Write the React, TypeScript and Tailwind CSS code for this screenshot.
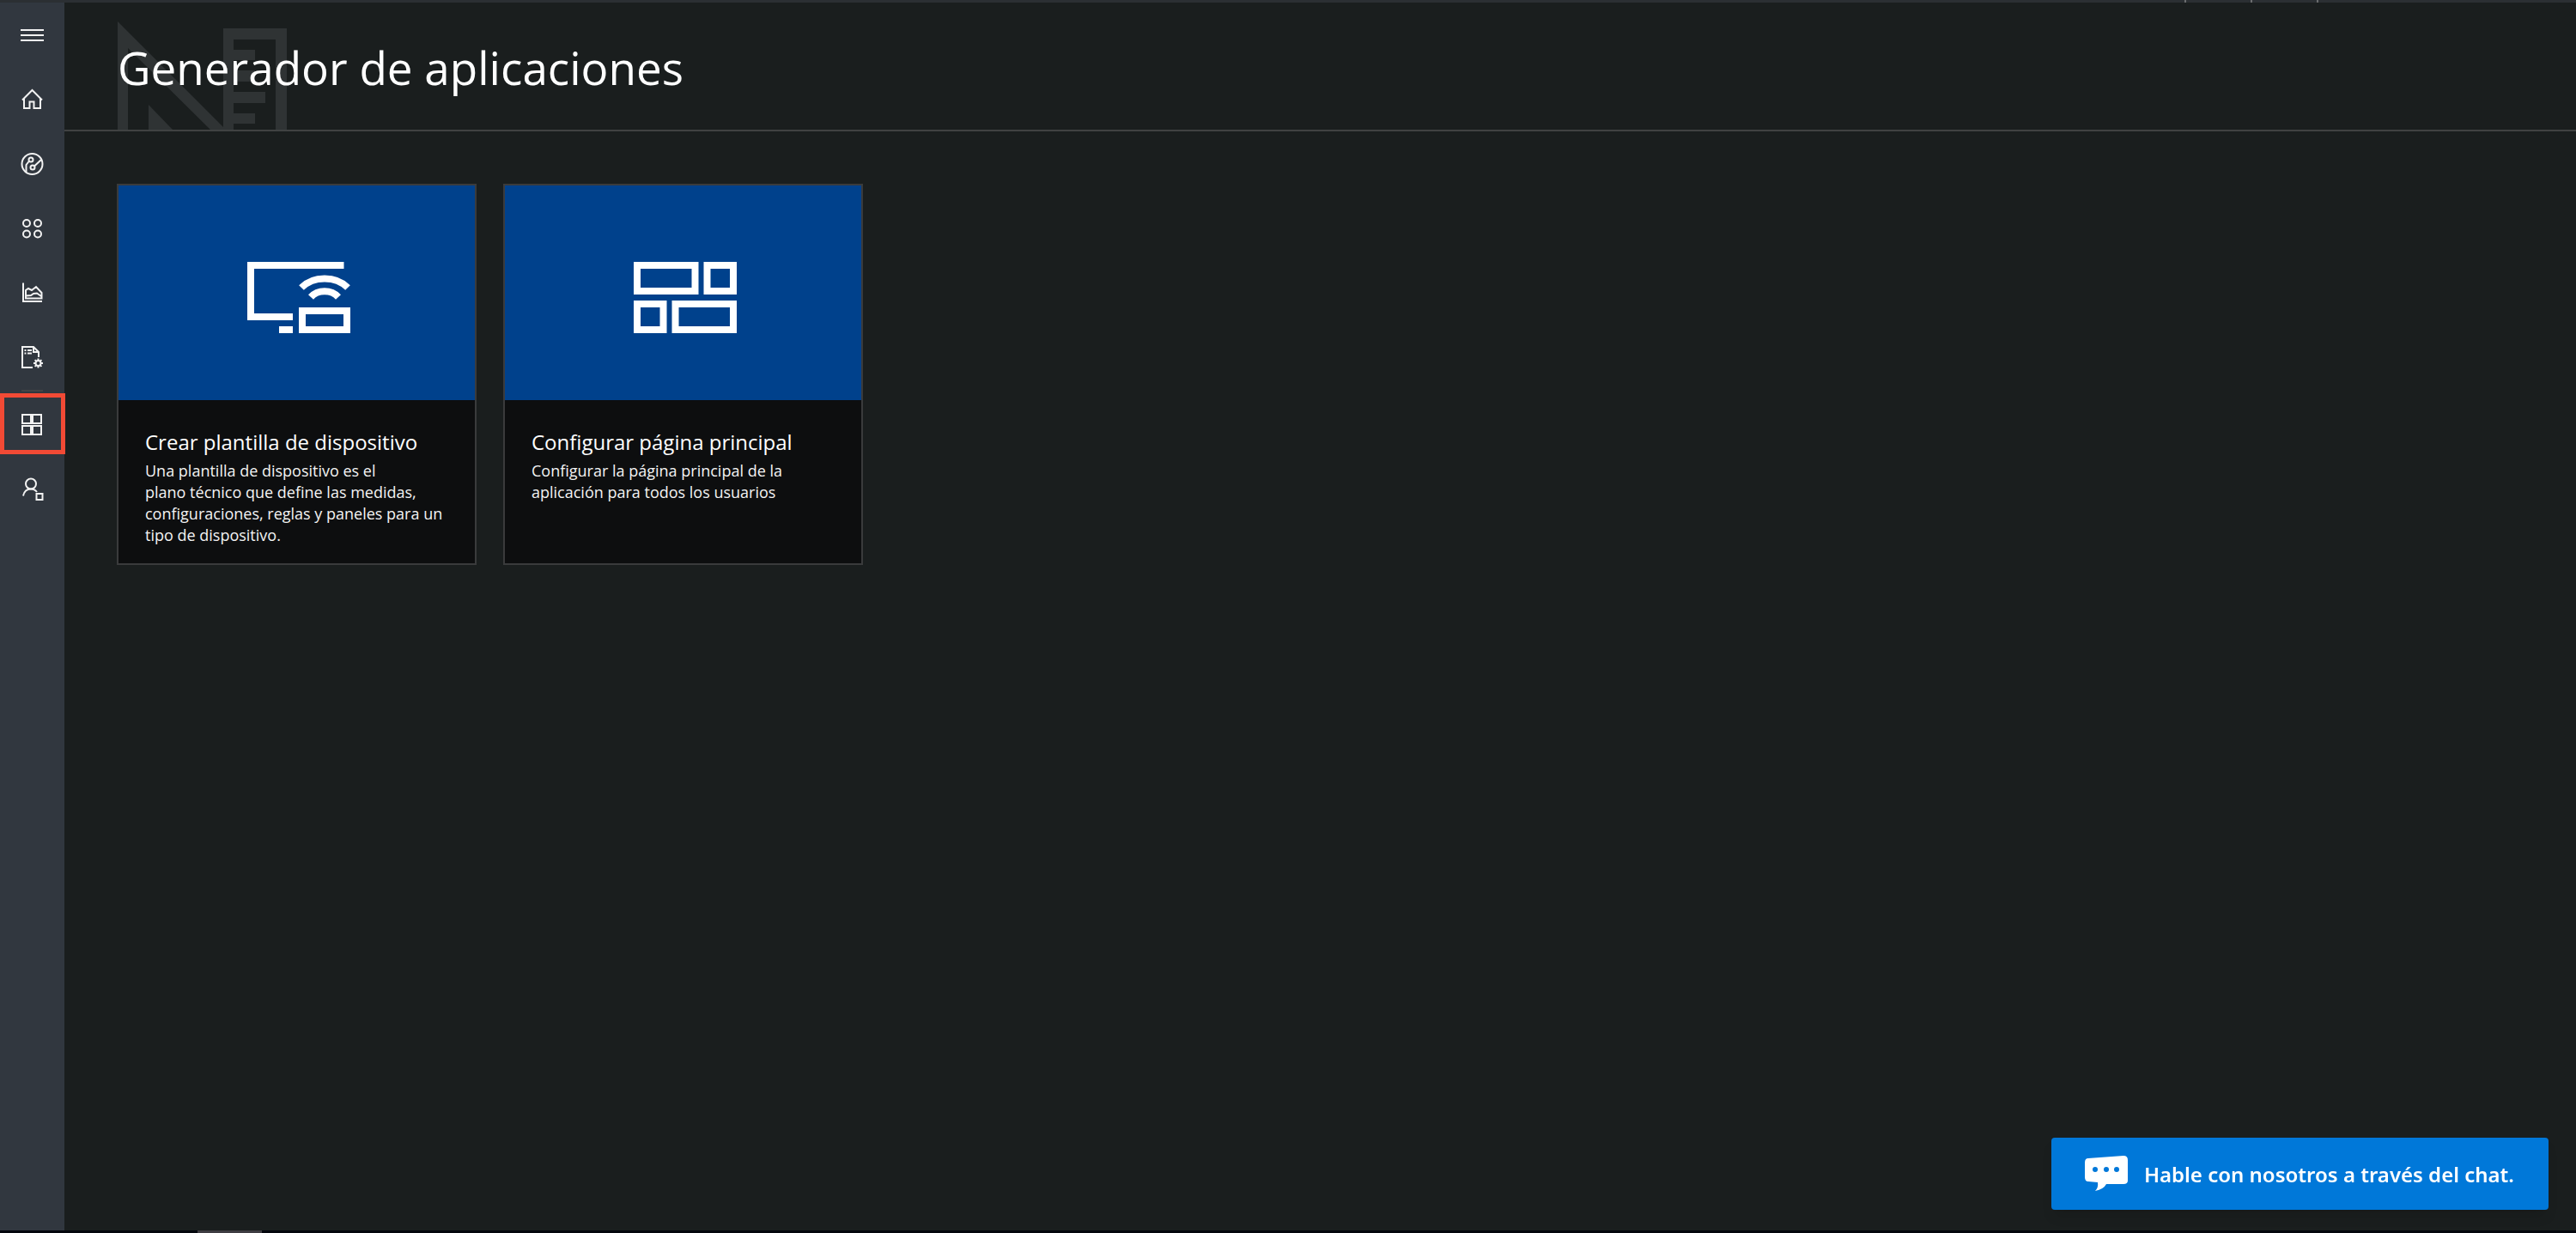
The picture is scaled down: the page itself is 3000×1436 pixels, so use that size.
import React from "react";

const stroke = { fill: "none", stroke: "currentColor", strokeWidth: 2 } as const;

function Glyph({ children }: { children: React.ReactNode }) {
  return (
    <svg width="27" height="27" viewBox="0 0 27 27" aria-hidden="true" {...stroke}>
      {children}
    </svg>
  );
}

const MenuIcon = () => (
  <Glyph>
    <path d="M0 8h27M0 14h27M0 20h27" />
  </Glyph>
);

const HomeIcon = () => (
  <Glyph>
    <path d="M2 14.500 13.500 3 25 14.500M4 12.500V24h6.500v-7.500h5V24H23V12.500" />
  </Glyph>
);

const DevicesIcon = () => (
  <Glyph>
    <circle cx="13.500" cy="14" r="12" />
    <circle cx="12" cy="9" r="2.500" />
    <circle cx="14" cy="18" r="2.500" />
    <path d="M6.500 23.500V15l3.500-4.500M16 16.500 24 9" />
  </Glyph>
);

const GroupsIcon = () => (
  <Glyph>
    <circle cx="7" cy="8" r="4" />
    <circle cx="20" cy="8" r="4" />
    <circle cx="7" cy="20.500" r="4" />
    <circle cx="20" cy="20.500" r="4" />
  </Glyph>
);

const AnalyticsIcon = () => (
  <Glyph>
    <path d="M3 2.500V24h22" />
    <path d="M6 20.500V11l3-2 4 2 5-4 6.500 7v6.500zM6 17.500l6-.5 3-2 4-.5 5 3.500" />
  </Glyph>
);

const JobsIcon = () => (
  <Glyph>
    <path d="M14 26H2V2h13l6 6v6M15 2v6h6" />
    <path d="M4.500 6h2M8 6h5M4.500 9.500h2M8 9.500h5" />
    <circle cx="20.500" cy="21" r="3" />
    <path d="M20.500 15.500v2.500M20.500 24v2.500M15 21h2.500M23.500 21H26M16.600 17.100l1.800 1.800M22.600 23.100l1.800 1.800M24.400 17.100l-1.800 1.800M18.400 23.100l-1.800 1.800" />
  </Glyph>
);

const BuilderIcon = () => (
  <Glyph>
    <path d="M2 2h10v10H2zM14 2h10v10H14zM2 15h10v10H2zM14 15h10v10H14z" />
  </Glyph>
);

const AdminIcon = () => (
  <Glyph>
    <circle cx="12" cy="7.500" r="6" />
    <path d="M3 21.500c1-5 4.500-8 9-8 3 0 5.500 1.500 7 3.500M18.500 19h7v7h-7z" />
  </Glyph>
);

function NavItem({ label, children }: { label: string; children: React.ReactNode }) {
  return (
    <a href="#" aria-label={label} className="flex h-[75px] w-full shrink-0 items-center justify-center">
      {children}
    </a>
  );
}

function Watermark() {
  return (
    <svg
      className="absolute bottom-0 left-[62px] text-[#2f3334]"
      width="197"
      height="126"
      viewBox="0 0 197 126"
      fill="currentColor"
      aria-hidden="true"
    >
      <path fillRule="evenodd" d="M0 0 123 123V8h74v118h-13V21h-49v12h25v12h-25v12h25v13h-25v12h37v13h-37v12h25v12h-25v7h-27L12 31v95H0z" />
      <path d="M36 97v29h28z" />
    </svg>
  );
}

const TemplateArt = () => (
  <svg width="120" height="84" viewBox="0 0 120 84" fill="none" stroke="#fff" strokeWidth="8" aria-hidden="true">
    <path d="M112.500 4H4v60h49M37 79h16M64 57h52v22H64z" />
    <path d="M63 30c14-14 40-14 54 0M74 41c8-9 24-9 32 0" />
  </svg>
);

const HomepageArt = () => (
  <svg width="120" height="84" viewBox="0 0 120 84" fill="none" stroke="#fff" strokeWidth="8" aria-hidden="true">
    <path d="M4 4h67.500v30H4zM85.500 4H116v30H85.500zM4 49h30.500v30H4zM48.500 49H116v30H48.500z" />
  </svg>
);

function Card({ art, title, children }: { art: React.ReactNode; title: string; children: React.ReactNode }) {
  return (
    <a href="#" className="flex w-[419px] flex-col border-2 border-[#3a3b3c] bg-[#0d0e0f]">
      <div className="flex h-[250px] items-center justify-center bg-[#00418c] pt-3 pl-1">{art}</div>
      <div className="px-[31px] pt-[30px] pb-5">
        <h2 className="pb-0.5 text-2xl leading-[38px] text-white">{title}</h2>
        <p className="text-lg leading-[25px] text-[#f3f3f3]">{children}</p>
      </div>
    </a>
  );
}

export default function App() {
  return (
    <div className="flex min-h-screen flex-col bg-[#1a1e1e] font-['Open_Sans','Noto_Sans',sans-serif]">
      <div className="flex h-[3px] justify-end gap-[75px] bg-[#2b2f33] pr-[300px]">
        <span className="w-0.5 bg-[#6a6c6e]" />
        <span className="w-0.5 bg-[#6a6c6e]" />
        <span className="w-0.5 bg-[#6a6c6e]" />
      </div>

      <div className="flex flex-1">
        <nav className="relative flex w-[75px] shrink-0 flex-col items-center bg-[#31373f] text-[#f2f2f2]">
          <button type="button" aria-label="Menú" className="flex h-[75px] w-full items-center justify-center">
            <MenuIcon />
          </button>
          <NavItem label="Panel"><HomeIcon /></NavItem>
          <NavItem label="Dispositivos"><DevicesIcon /></NavItem>
          <NavItem label="Conjuntos de dispositivos"><GroupsIcon /></NavItem>
          <NavItem label="Análisis"><AnalyticsIcon /></NavItem>
          <NavItem label="Trabajos"><JobsIcon /></NavItem>
          <div className="my-px h-0.5 w-[25px] bg-[#444546]" />
          <div className="relative w-full">
            <NavItem label="Generador de aplicaciones"><BuilderIcon /></NavItem>
            <div className="pointer-events-none absolute top-px left-0 h-[71px] w-[76px] border-5 border-[#f24a35]" />
          </div>
          <NavItem label="Administración"><AdminIcon /></NavItem>
        </nav>

        <main className="flex min-w-0 flex-1 flex-col">
          <header className="relative flex h-[150px] items-center border-b-2 border-[#404242] px-[62px] pt-1">
            <Watermark />
            <h1 className="relative text-[53px] leading-[72px] text-white">Generador de aplicaciones</h1>
          </header>
          <div className="flex flex-wrap items-stretch gap-[31px] px-[61px] pt-[61px]">
            <Card art={<TemplateArt />} title="Crear plantilla de dispositivo">
              Una plantilla de dispositivo es el
              <br />
              plano técnico que define las medidas, configuraciones, reglas y paneles para un tipo de dispositivo.
            </Card>
            <Card art={<HomepageArt />} title="Configurar página principal">
              Configurar la página principal de la aplicación para todos los usuarios
            </Card>
          </div>
        </main>
      </div>

      <div className="flex h-[3px] bg-[#03060d] pl-[230px]">
        <span className="w-[75px] bg-[#3e3c42]" />
      </div>

      <button
        type="button"
        className="fixed right-8 bottom-[27px] flex h-[84px] items-center gap-[18px] rounded-sm bg-[#0078d9] pr-10 pl-[38px] font-['Noto_Sans',sans-serif] text-2xl font-semibold text-white shadow-lg"
      >
        <svg width="52" height="42" viewBox="0 0 52 42" aria-hidden="true">
          <path d="M5 3 46 0q5 0 5 5v24q0 4-5 4H26q-3 6-13 8 4-4 3-10L5 30q-4 0-4-5V8q0-5 4-5z" fill="#fff" />
          <circle cx="13" cy="16" r="3" fill="#0078d9" />
          <circle cx="26" cy="16" r="3" fill="#0078d9" />
          <circle cx="38" cy="16" r="3" fill="#0078d9" />
        </svg>
        <span className="pt-0.5">Hable con nosotros a través del chat.</span>
      </button>
    </div>
  );
}
